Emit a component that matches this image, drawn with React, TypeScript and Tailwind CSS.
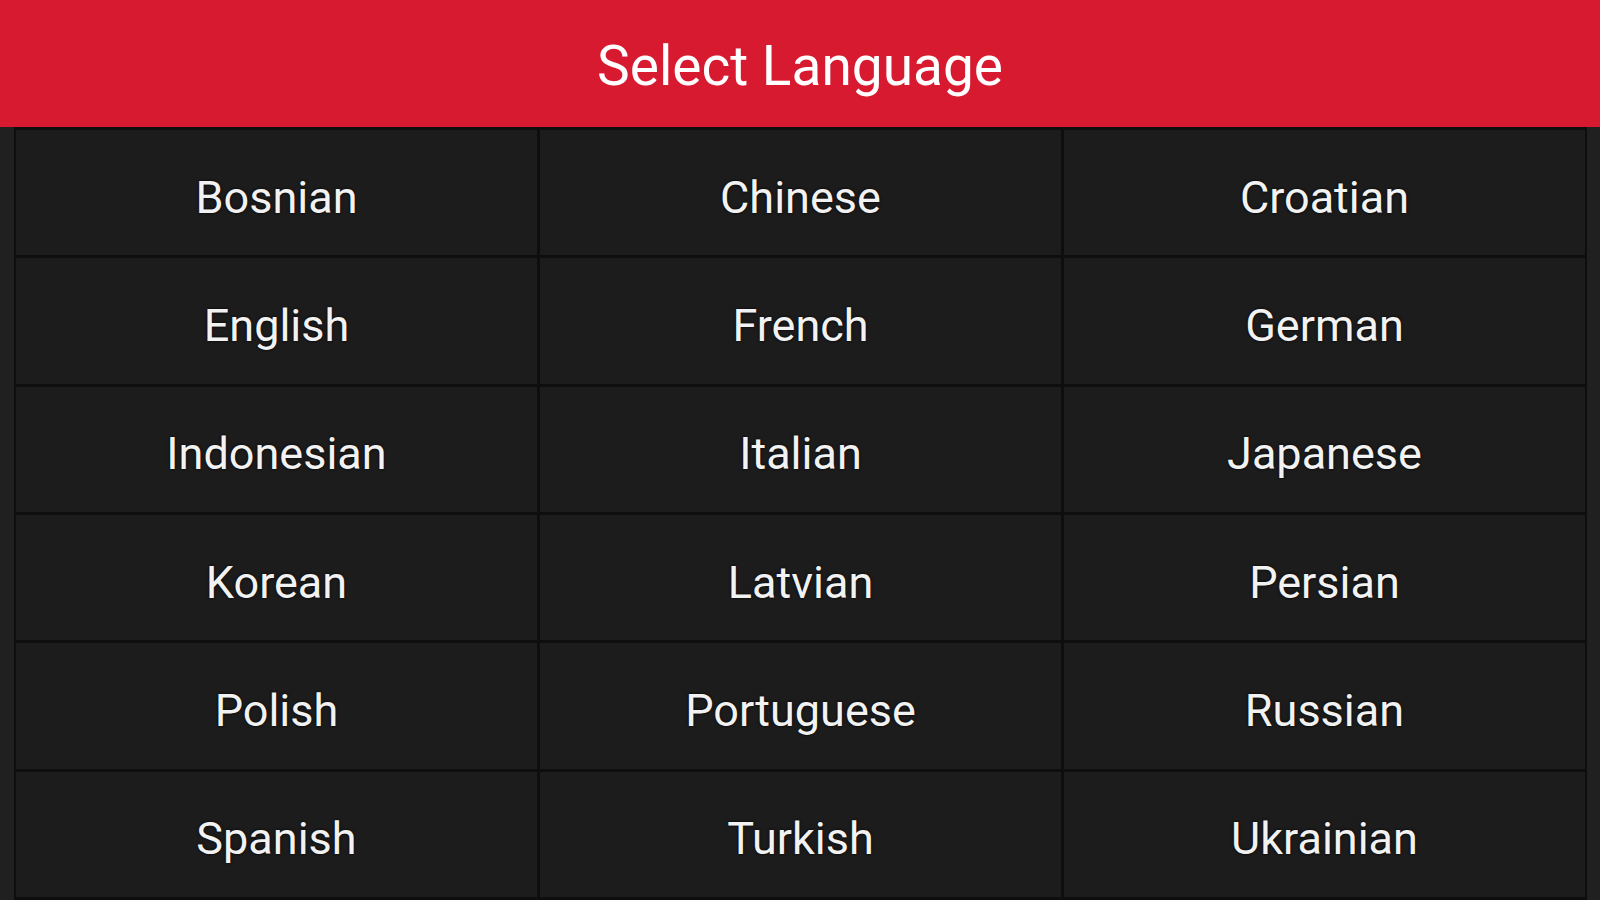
import * as React from "react";

const languages = [
  "Bosnian", "Chinese", "Croatian",
  "English", "French", "German",
  "Indonesian", "Italian", "Japanese",
  "Korean", "Latvian", "Persian",
  "Polish", "Portuguese", "Russian",
  "Spanish", "Turkish", "Ukrainian",
];

export default function App() {
  return (
    <div
      className="flex flex-col w-[1600px] h-[900px] bg-[#202020] overflow-hidden"
      style={{ fontFamily: "Roboto, 'Noto Sans', sans-serif" }}
    >
      {/* Header */}
      <header className="flex-shrink-0 flex h-[127px] items-center justify-center bg-[#d81a30]">
        <h1 className="text-[55px] leading-none text-white pt-[6px]">Select Language</h1>
      </header>

      {/* Language grid */}
      <div className="flex-1 min-h-0 ml-[14px] mr-[13px] px-[2px] py-[3px] bg-[#0e0e0e] grid grid-cols-3 grid-rows-6 gap-[3px]">
        {languages.map((lang) => (
          <button
            key={lang}
            className="flex items-center justify-center pt-[9px] bg-[#1c1c1c] text-[45px] leading-none text-[#f2f2f2] [text-shadow:0_0_3px_#000]"
          >
            {lang}
          </button>
        ))}
      </div>
    </div>
  );
}
